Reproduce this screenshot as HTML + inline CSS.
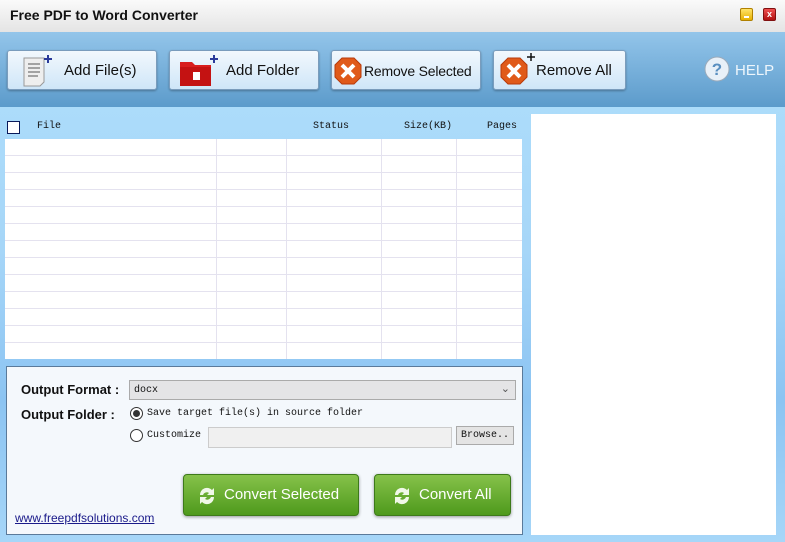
<!DOCTYPE html>
<html><head><meta charset="utf-8"><style>
*{margin:0;padding:0;box-sizing:border-box}
body{width:785px;height:542px;overflow:hidden;font-family:"Liberation Sans",sans-serif;position:relative;background:linear-gradient(#b0e0fc 0,#a6d6f8 250px,#8cc4f2 400px,#a6d6f8 542px)}
.abs{position:absolute;white-space:nowrap}
#title{left:0;top:0;width:785px;height:32px;background:linear-gradient(#fafafa,#e4e4e4);}
#title span{position:absolute;left:10px;top:7px;font-weight:bold;font-size:14px;color:#111}
#tb{left:0;top:32px;width:785px;height:75px;background:linear-gradient(#93c5ea,#5c9bcb)}
.btn{position:absolute;top:18px;height:40px;border:1px solid #7a9cbc;border-radius:3px;background:linear-gradient(#f2f8fd,#cfe6f8);box-shadow:0 1px 2px rgba(0,0,0,.3);font-size:15px;color:#111;white-space:nowrap}
.btn span{position:absolute;top:11px}
.mono{font-family:"Liberation Mono",monospace;font-size:10px;color:#111}
#grid{left:5px;top:139px;width:517px;height:220px;background:#fff;
background-image:linear-gradient(#e4e2ef 1px,transparent 1px);background-size:100% 17px;background-position:0 16px}
.vl{position:absolute;top:0;width:1px;height:220px;background:#e4e2ef}
#low{left:6px;top:366px;width:517px;height:169px;background:#f4f8fc;border:1px solid #5a7a9a}
.lbl{position:absolute;font-weight:bold;font-size:13px;color:#111}
.radio{position:absolute;width:13px;height:13px;border:1px solid #333;border-radius:50%;background:#fff}
.gbtn{position:absolute;top:107px;height:42px;border:1px solid #3d7a1a;border-radius:4px;background:linear-gradient(#86c24a,#4e9a1c);box-shadow:0 1px 3px rgba(0,0,0,.4);color:#fff;font-size:15px}
</style></head><body>
<div id="title" class="abs"><span>Free PDF to Word Converter</span>
<div class="abs" style="left:740px;top:8px;width:13px;height:13px;background:linear-gradient(#ffe46a,#e6b000);border:1px solid #b08000;border-radius:2px"><div class="abs" style="left:3px;top:7px;width:5px;height:2px;background:#fff"></div></div>
<div class="abs" style="left:763px;top:8px;width:13px;height:13px;background:linear-gradient(#f05050,#b01010);border:1px solid #801010;border-radius:2px;color:#fff;font-size:9px;font-weight:bold;text-align:center;line-height:11px">x</div>
</div>
<div id="tb" class="abs">
<div class="btn" style="left:7px;width:150px">
<svg class="abs" style="left:13px;top:3px" width="34" height="34"><path d="M3 4h20v24l-4 4H3z" fill="#eee" stroke="#999"/><path d="M7 10h12M7 14h12M7 18h12M7 22h10" stroke="#888" stroke-width="1.5"/><path d="M27 1v8M23 5h8" stroke="#2a3a9a" stroke-width="2"/></svg>
<span style="left:56px">Add File(s)</span></div>
<div class="btn" style="left:169px;width:150px">
<svg class="abs" style="left:8px;top:3px" width="40" height="34"><path d="M2 8h12l3 3h16v21H2z" fill="#d81e1e"/><path d="M2 13h31v19H2z" fill="#c41212"/><rect x="15" y="18" width="7" height="8" fill="#fff"/><path d="M36 1v8M32 5h8" stroke="#2a3a9a" stroke-width="2"/></svg>
<span style="left:56px">Add Folder</span></div>
<div class="btn" style="left:331px;width:150px">
<svg class="abs" style="left:2px;top:6px" width="28" height="28"><polygon points="8,1 20,1 27,8 27,20 20,27 8,27 1,20 1,8" fill="#e05a1a" stroke="#b83a0a"/><path d="M8 8l12 12M20 8L8 20" stroke="#fff" stroke-width="4"/></svg>
<span style="left:32px;font-size:14px;letter-spacing:-0.2px;top:12px">Remove Selected</span></div>
<div class="btn" style="left:493px;width:133px">
<svg class="abs" style="left:6px;top:2px" width="36" height="34"><polygon points="8,5 20,5 27,12 27,24 20,31 8,31 1,24 1,12" fill="#e05a1a" stroke="#b83a0a"/><path d="M8 12l12 12M20 12L8 24" stroke="#fff" stroke-width="4"/><path d="M31 0v8M27 4h8" stroke="#111" stroke-width="1.5"/></svg>
<span style="left:42px">Remove All</span></div>
<svg class="abs" style="left:704px;top:24px" width="26" height="26"><circle cx="13" cy="13" r="12" fill="#e8f0f8" stroke="#9ab"/><text x="13" y="19" text-anchor="middle" font-family="Liberation Sans" font-weight="bold" font-size="17" fill="#5a8fc0">?</text></svg>
<span class="abs" style="left:735px;top:30px;color:#eef6fc;font-size:15px">HELP</span>
</div>
<div class="abs" style="left:7px;top:121px;width:13px;height:13px;border:1px solid #0a1a5a;background:#fff"></div>
<span class="abs mono" style="left:37px;top:121px">File</span>
<span class="abs mono" style="left:313px;top:121px">Status</span>
<span class="abs mono" style="left:404px;top:121px">Size(KB)</span>
<span class="abs mono" style="left:487px;top:121px">Pages</span>
<div id="grid" class="abs"><div class="vl" style="left:211px"></div><div class="vl" style="left:281px"></div><div class="vl" style="left:376px"></div><div class="vl" style="left:451px"></div></div>
<div class="abs" style="left:531px;top:114px;width:245px;height:421px;background:#fff"></div>
<div id="low" class="abs">
<span class="lbl" style="left:14px;top:15px">Output Format :</span>
<div class="abs" style="left:122px;top:13px;width:387px;height:20px;background:#e4e4e6;border:1px solid #aaa"><span class="mono abs" style="left:4px;top:4px">docx</span><span class="abs" style="right:5px;top:1px;font-size:11px;color:#555">&#8964;</span></div>
<span class="lbl" style="left:14px;top:40px">Output Folder :</span>
<div class="radio" style="left:123px;top:40px"><div class="abs" style="left:2px;top:2px;width:7px;height:7px;border-radius:50%;background:#333"></div></div>
<span class="mono abs" style="left:140px;top:41px">Save target file(s) in source folder</span>
<div class="radio" style="left:123px;top:62px"></div>
<span class="mono abs" style="left:140px;top:63px">Customize</span>
<div class="abs" style="left:201px;top:60px;width:244px;height:21px;background:#f0f0f0;border:1px solid #ccc"></div>
<div class="abs" style="left:449px;top:59px;width:58px;height:19px;background:#e4e4e4;border:1px solid #aaa"><span class="mono abs" style="left:4px;top:3px">Browse..</span></div>
<div class="gbtn" style="left:176px;width:176px"><svg class="abs" style="left:12px;top:9px" width="22" height="24"><path d="M4 11a7 7 0 0 1 12-5l2-2v7h-7l2-2a4 4 0 0 0-6 2z M18 13a7 7 0 0 1-12 5l-2 2v-7h7l-2 2a4 4 0 0 0 6-2z" fill="#f0f8e8"/></svg><span class="abs" style="left:40px;top:11px">Convert Selected</span></div>
<div class="gbtn" style="left:367px;width:137px"><svg class="abs" style="left:16px;top:9px" width="22" height="24"><path d="M4 11a7 7 0 0 1 12-5l2-2v7h-7l2-2a4 4 0 0 0-6 2z M18 13a7 7 0 0 1-12 5l-2 2v-7h7l-2 2a4 4 0 0 0 6-2z" fill="#f0f8e8"/></svg><span class="abs" style="left:44px;top:11px">Convert All</span></div>
<span class="abs" style="left:8px;top:144px;font-size:12px;color:#1a1a8a;text-decoration:underline">www.freepdfsolutions.com</span>
</div>
</body></html>
